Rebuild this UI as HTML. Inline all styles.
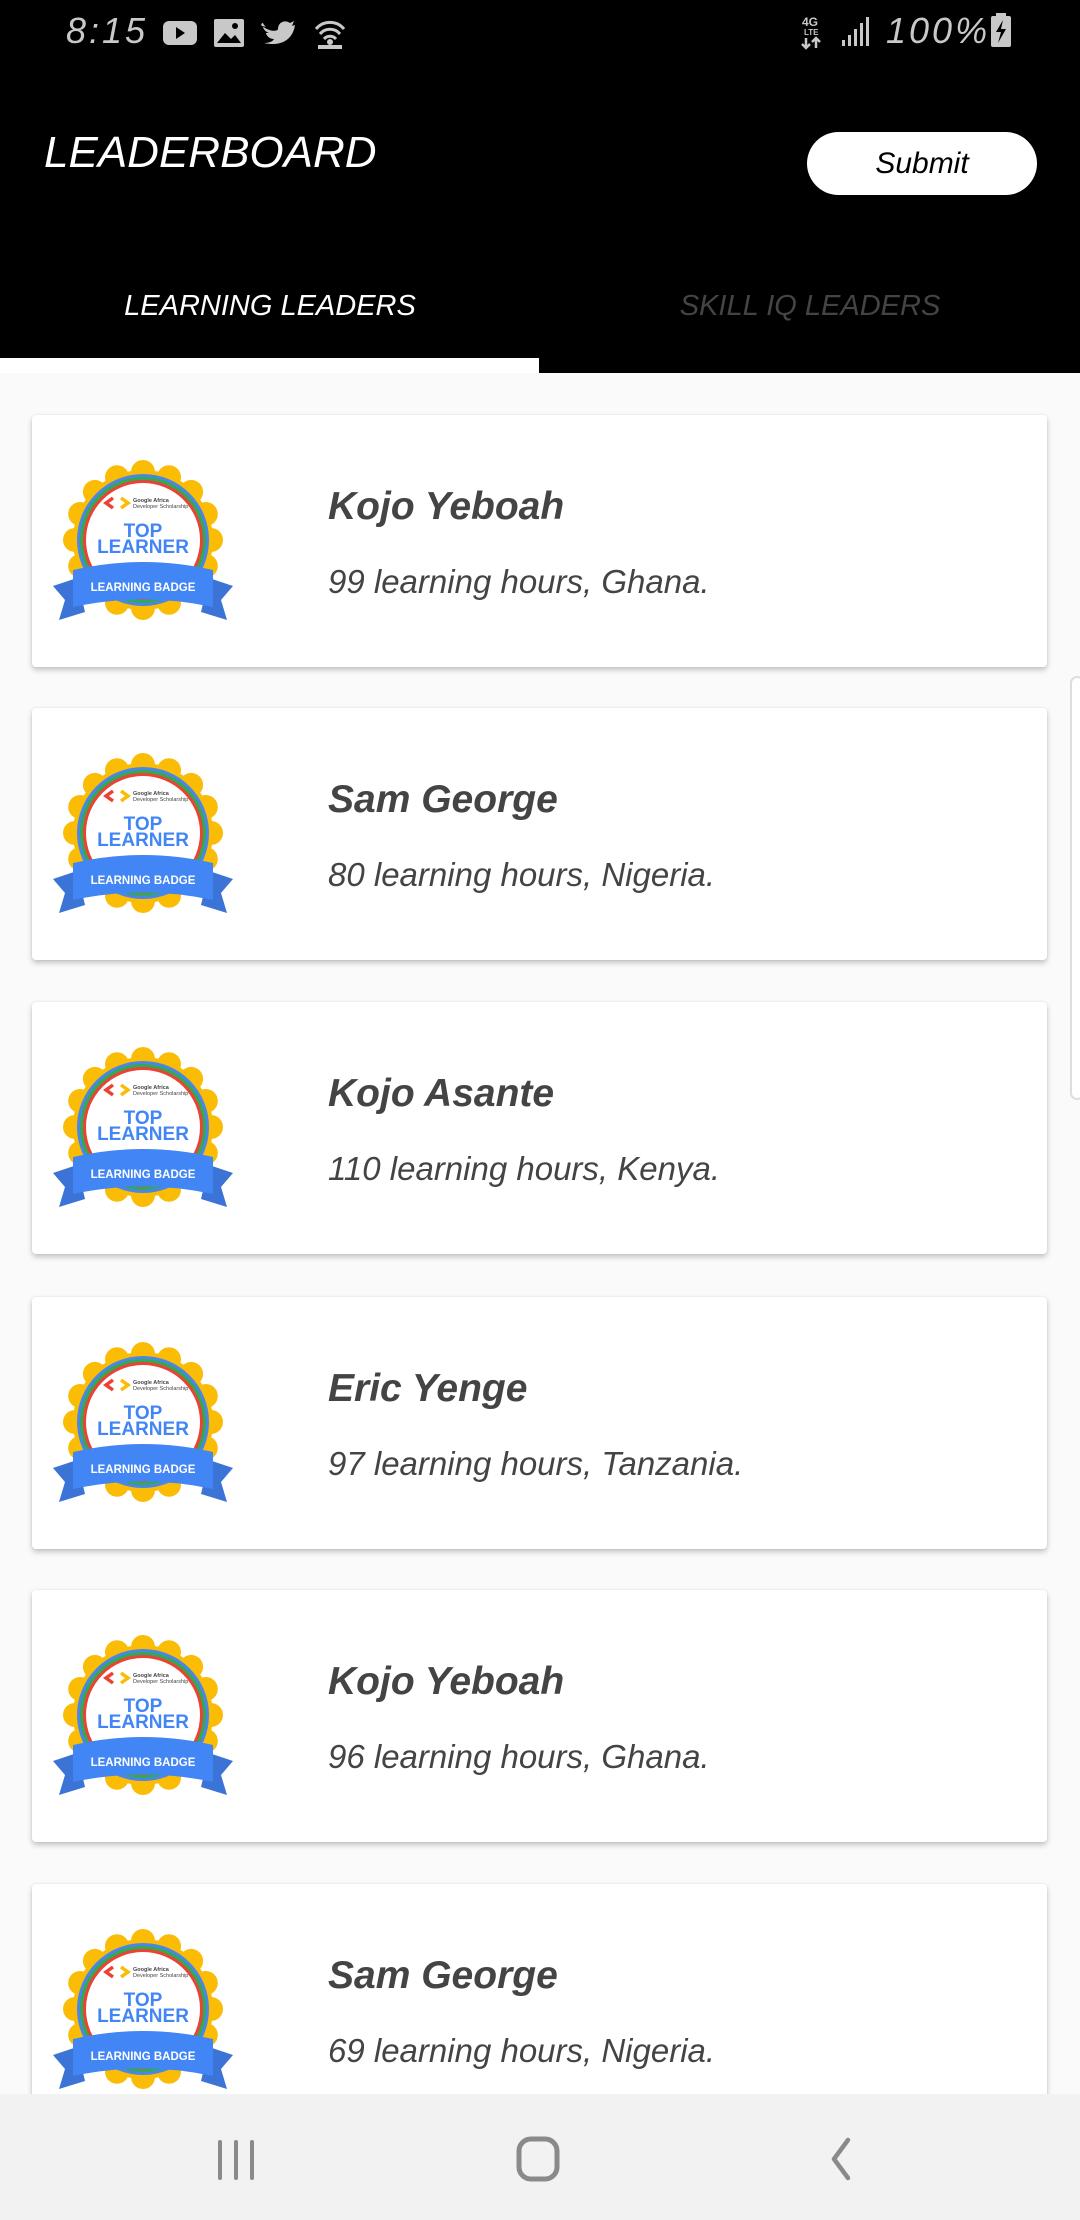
<!DOCTYPE html>
<html><head><meta charset="utf-8"><style>
*{margin:0;padding:0;box-sizing:border-box}
body{width:1080px;height:2220px;overflow:hidden;background:#fafafa;font-family:"Liberation Sans",sans-serif;position:relative}
.hdr{position:absolute;left:0;top:0;width:1080px;height:373px;background:#000}
.sb{position:absolute;top:10px;color:#c8c8c8;font-size:36px;font-style:italic;letter-spacing:3px}
.title{position:absolute;left:44px;top:128px;color:#fff;font-size:44px;font-style:italic;letter-spacing:0px}
.btn{position:absolute;left:807px;top:132px;width:230px;height:63px;border-radius:32px;background:#fff;color:#000;font-size:30px;font-style:italic;text-align:center;line-height:63px}
.tab{position:absolute;top:290px;font-size:29px;font-style:italic;text-align:center;width:540px}
.ind{position:absolute;left:0;top:358px;width:539px;height:15px;background:#fff}
.card{position:absolute;left:32px;width:1015px;height:252px;background:#fff;border-radius:4px;box-shadow:0 3px 6px rgba(0,0,0,.22),0 0 2px rgba(0,0,0,.08)}
.card svg{position:absolute;left:0;top:0}
.nm{position:absolute;left:296px;top:70px;font-size:39px;font-weight:bold;font-style:italic;color:#444}
.dt{position:absolute;left:296px;top:148px;font-size:33px;font-style:italic;color:#444}
.nav{position:absolute;left:0;top:2094px;width:1080px;height:126px;background:#f2f2f2}
</style></head><body>
<div class="hdr">
<div class="sb" style="left:66px">8:15</div>
<svg style="position:absolute;left:160px;top:17px" width="200" height="32" viewBox="0 0 200 32">
<rect x="3" y="4" width="34" height="24" rx="6" fill="#c8c8c8"/><path d="M16 10 L25 16 L16 22Z" fill="#000"/>
<rect x="54" y="2" width="30" height="28" rx="2" fill="#c8c8c8"/><path d="M57 26 L65 16 L71 22 L75 18 L81 26Z" fill="#000"/><circle cx="75" cy="9" r="3" fill="#000"/>
<path d="M101 8 C110 16 118 14 118 12 C118 6 124 2 130 6 L134 4 L132 9 L135 8 C133 22 122 30 104 26 C110 26 113 24 114 22 C109 22 106 18 106 16 L109 16 C104 14 103 11 103 9 L106 10 C102 6 103 4 101 8Z" fill="#c8c8c8"/>
<path d="M156 12 A18 18 0 0 1 184 12 M160 17 A13 13 0 0 1 180 17 M164 22 A8 8 0 0 1 176 22" stroke="#c8c8c8" stroke-width="3" fill="none"/><circle cx="170" cy="25" r="3" fill="#c8c8c8"/><rect x="158" y="28" width="24" height="4" fill="#c8c8c8"/>
</svg>
<svg style="position:absolute;left:800px;top:14px" width="40" height="36"><text x="2" y="12" fill="#c8c8c8" font-size="12" font-weight="bold" font-family="Liberation Sans">4G</text><text x="4" y="21" fill="#c8c8c8" font-size="8" font-weight="bold" font-family="Liberation Sans">LTE</text><path d="M6 24 V34 M2 30 L6 34 L10 30 M16 34 V24 M12 28 L16 24 L20 28" stroke="#c8c8c8" stroke-width="2.5" fill="none"/></svg>
<svg style="position:absolute;left:840px;top:16px" width="30" height="32"><rect x="2" y="24" width="3" height="6" fill="#c8c8c8"/><rect x="8" y="19" width="3" height="11" fill="#c8c8c8"/><rect x="14" y="13" width="3" height="17" fill="#c8c8c8"/><rect x="20" y="7" width="3" height="23" fill="#c8c8c8"/><rect x="26" y="1" width="3" height="29" fill="#c8c8c8"/></svg>
<div class="sb" style="left:886px">100%</div>
<svg style="position:absolute;left:990px;top:13px" width="24" height="36"><rect x="6" y="0" width="10" height="4" fill="#c8c8c8"/><rect x="1" y="3" width="20" height="31" rx="2" fill="#c8c8c8"/><path d="M13 7 L6 19 L11 19 L8 30 L16 16 L11 16Z" fill="#000"/></svg>
<div class="title">LEADERBOARD</div>
<div class="btn">Submit</div>
<div class="tab" style="left:0;color:#fff">LEARNING LEADERS</div>
<div class="tab" style="left:540px;color:#444">SKILL IQ LEADERS</div>
</div>
<div class="ind"></div>

<div class="card" style="top:415px">
<svg width="230" height="250"><g transform="translate(111,125)">
<circle r="70" fill="#fbbc05"/><g fill="#fbbc05"><circle cx="68" cy="0" r="12"/><circle cx="62.8" cy="26" r="12"/><circle cx="48.1" cy="48.1" r="12"/><circle cx="26" cy="62.8" r="12"/><circle cx="0" cy="68" r="12"/><circle cx="-26" cy="62.8" r="12"/><circle cx="-48.1" cy="48.1" r="12"/><circle cx="-62.8" cy="26" r="12"/><circle cx="-68" cy="0" r="12"/><circle cx="-62.8" cy="-26" r="12"/><circle cx="-48.1" cy="-48.1" r="12"/><circle cx="-26" cy="-62.8" r="12"/><circle cx="0" cy="-68" r="12"/><circle cx="26" cy="-62.8" r="12"/><circle cx="48.1" cy="-48.1" r="12"/><circle cx="62.8" cy="-26" r="12"/></g>
<circle r="66" fill="#4a86e8"/><circle r="63" fill="#34a853"/><circle r="60" fill="#ea4335"/><circle r="57" fill="#fff"/>
<path d="M-30,-42 L-37,-37 L-30,-32" stroke="#ea4335" stroke-width="3.5" fill="none"/><path d="M-22,-42 L-15,-37 L-22,-32" stroke="#fbbc05" stroke-width="3.5" fill="none"/>
<text x="-10" y="-38" font-size="5.5" font-weight="bold" fill="#444" font-family="Liberation Sans">Google Africa</text><text x="-10" y="-32" font-size="5.5" fill="#444" font-family="Liberation Sans">Developer Scholarship</text>
<text x="0" y="-3" text-anchor="middle" font-size="19" font-weight="bold" fill="#4285f4" font-family="Liberation Sans">TOP</text><text x="0" y="13" text-anchor="middle" font-size="19" font-weight="bold" fill="#4285f4" font-family="Liberation Sans">LEARNER</text>
<path d="M-66,38 L-90,46 L-78,60 L-84,80 L-58,72 Z" fill="#3b73d6"/><path d="M66,38 L90,46 L78,60 L84,80 L58,72 Z" fill="#3b73d6"/>
<path d="M-70,30 Q0,14 70,30 L70,67 Q0,52 -70,67 Z" fill="#4285f4"/>
<text x="0" y="51" text-anchor="middle" font-size="11.5" font-weight="bold" fill="#fff" font-family="Liberation Sans">LEARNING BADGE</text></g></svg>
<div class="nm">Kojo Yeboah</div><div class="dt">99 learning hours, Ghana.</div></div>

<div class="card" style="top:708px">
<svg width="230" height="250"><g transform="translate(111,125)">
<circle r="70" fill="#fbbc05"/><g fill="#fbbc05"><circle cx="68" cy="0" r="12"/><circle cx="62.8" cy="26" r="12"/><circle cx="48.1" cy="48.1" r="12"/><circle cx="26" cy="62.8" r="12"/><circle cx="0" cy="68" r="12"/><circle cx="-26" cy="62.8" r="12"/><circle cx="-48.1" cy="48.1" r="12"/><circle cx="-62.8" cy="26" r="12"/><circle cx="-68" cy="0" r="12"/><circle cx="-62.8" cy="-26" r="12"/><circle cx="-48.1" cy="-48.1" r="12"/><circle cx="-26" cy="-62.8" r="12"/><circle cx="0" cy="-68" r="12"/><circle cx="26" cy="-62.8" r="12"/><circle cx="48.1" cy="-48.1" r="12"/><circle cx="62.8" cy="-26" r="12"/></g>
<circle r="66" fill="#4a86e8"/><circle r="63" fill="#34a853"/><circle r="60" fill="#ea4335"/><circle r="57" fill="#fff"/>
<path d="M-30,-42 L-37,-37 L-30,-32" stroke="#ea4335" stroke-width="3.5" fill="none"/><path d="M-22,-42 L-15,-37 L-22,-32" stroke="#fbbc05" stroke-width="3.5" fill="none"/>
<text x="-10" y="-38" font-size="5.5" font-weight="bold" fill="#444" font-family="Liberation Sans">Google Africa</text><text x="-10" y="-32" font-size="5.5" fill="#444" font-family="Liberation Sans">Developer Scholarship</text>
<text x="0" y="-3" text-anchor="middle" font-size="19" font-weight="bold" fill="#4285f4" font-family="Liberation Sans">TOP</text><text x="0" y="13" text-anchor="middle" font-size="19" font-weight="bold" fill="#4285f4" font-family="Liberation Sans">LEARNER</text>
<path d="M-66,38 L-90,46 L-78,60 L-84,80 L-58,72 Z" fill="#3b73d6"/><path d="M66,38 L90,46 L78,60 L84,80 L58,72 Z" fill="#3b73d6"/>
<path d="M-70,30 Q0,14 70,30 L70,67 Q0,52 -70,67 Z" fill="#4285f4"/>
<text x="0" y="51" text-anchor="middle" font-size="11.5" font-weight="bold" fill="#fff" font-family="Liberation Sans">LEARNING BADGE</text></g></svg>
<div class="nm">Sam George</div><div class="dt">80 learning hours, Nigeria.</div></div>

<div class="card" style="top:1002px">
<svg width="230" height="250"><g transform="translate(111,125)">
<circle r="70" fill="#fbbc05"/><g fill="#fbbc05"><circle cx="68" cy="0" r="12"/><circle cx="62.8" cy="26" r="12"/><circle cx="48.1" cy="48.1" r="12"/><circle cx="26" cy="62.8" r="12"/><circle cx="0" cy="68" r="12"/><circle cx="-26" cy="62.8" r="12"/><circle cx="-48.1" cy="48.1" r="12"/><circle cx="-62.8" cy="26" r="12"/><circle cx="-68" cy="0" r="12"/><circle cx="-62.8" cy="-26" r="12"/><circle cx="-48.1" cy="-48.1" r="12"/><circle cx="-26" cy="-62.8" r="12"/><circle cx="0" cy="-68" r="12"/><circle cx="26" cy="-62.8" r="12"/><circle cx="48.1" cy="-48.1" r="12"/><circle cx="62.8" cy="-26" r="12"/></g>
<circle r="66" fill="#4a86e8"/><circle r="63" fill="#34a853"/><circle r="60" fill="#ea4335"/><circle r="57" fill="#fff"/>
<path d="M-30,-42 L-37,-37 L-30,-32" stroke="#ea4335" stroke-width="3.5" fill="none"/><path d="M-22,-42 L-15,-37 L-22,-32" stroke="#fbbc05" stroke-width="3.5" fill="none"/>
<text x="-10" y="-38" font-size="5.5" font-weight="bold" fill="#444" font-family="Liberation Sans">Google Africa</text><text x="-10" y="-32" font-size="5.5" fill="#444" font-family="Liberation Sans">Developer Scholarship</text>
<text x="0" y="-3" text-anchor="middle" font-size="19" font-weight="bold" fill="#4285f4" font-family="Liberation Sans">TOP</text><text x="0" y="13" text-anchor="middle" font-size="19" font-weight="bold" fill="#4285f4" font-family="Liberation Sans">LEARNER</text>
<path d="M-66,38 L-90,46 L-78,60 L-84,80 L-58,72 Z" fill="#3b73d6"/><path d="M66,38 L90,46 L78,60 L84,80 L58,72 Z" fill="#3b73d6"/>
<path d="M-70,30 Q0,14 70,30 L70,67 Q0,52 -70,67 Z" fill="#4285f4"/>
<text x="0" y="51" text-anchor="middle" font-size="11.5" font-weight="bold" fill="#fff" font-family="Liberation Sans">LEARNING BADGE</text></g></svg>
<div class="nm">Kojo Asante</div><div class="dt">110 learning hours, Kenya.</div></div>

<div class="card" style="top:1297px">
<svg width="230" height="250"><g transform="translate(111,125)">
<circle r="70" fill="#fbbc05"/><g fill="#fbbc05"><circle cx="68" cy="0" r="12"/><circle cx="62.8" cy="26" r="12"/><circle cx="48.1" cy="48.1" r="12"/><circle cx="26" cy="62.8" r="12"/><circle cx="0" cy="68" r="12"/><circle cx="-26" cy="62.8" r="12"/><circle cx="-48.1" cy="48.1" r="12"/><circle cx="-62.8" cy="26" r="12"/><circle cx="-68" cy="0" r="12"/><circle cx="-62.8" cy="-26" r="12"/><circle cx="-48.1" cy="-48.1" r="12"/><circle cx="-26" cy="-62.8" r="12"/><circle cx="0" cy="-68" r="12"/><circle cx="26" cy="-62.8" r="12"/><circle cx="48.1" cy="-48.1" r="12"/><circle cx="62.8" cy="-26" r="12"/></g>
<circle r="66" fill="#4a86e8"/><circle r="63" fill="#34a853"/><circle r="60" fill="#ea4335"/><circle r="57" fill="#fff"/>
<path d="M-30,-42 L-37,-37 L-30,-32" stroke="#ea4335" stroke-width="3.5" fill="none"/><path d="M-22,-42 L-15,-37 L-22,-32" stroke="#fbbc05" stroke-width="3.5" fill="none"/>
<text x="-10" y="-38" font-size="5.5" font-weight="bold" fill="#444" font-family="Liberation Sans">Google Africa</text><text x="-10" y="-32" font-size="5.5" fill="#444" font-family="Liberation Sans">Developer Scholarship</text>
<text x="0" y="-3" text-anchor="middle" font-size="19" font-weight="bold" fill="#4285f4" font-family="Liberation Sans">TOP</text><text x="0" y="13" text-anchor="middle" font-size="19" font-weight="bold" fill="#4285f4" font-family="Liberation Sans">LEARNER</text>
<path d="M-66,38 L-90,46 L-78,60 L-84,80 L-58,72 Z" fill="#3b73d6"/><path d="M66,38 L90,46 L78,60 L84,80 L58,72 Z" fill="#3b73d6"/>
<path d="M-70,30 Q0,14 70,30 L70,67 Q0,52 -70,67 Z" fill="#4285f4"/>
<text x="0" y="51" text-anchor="middle" font-size="11.5" font-weight="bold" fill="#fff" font-family="Liberation Sans">LEARNING BADGE</text></g></svg>
<div class="nm">Eric Yenge</div><div class="dt">97 learning hours, Tanzania.</div></div>

<div class="card" style="top:1590px">
<svg width="230" height="250"><g transform="translate(111,125)">
<circle r="70" fill="#fbbc05"/><g fill="#fbbc05"><circle cx="68" cy="0" r="12"/><circle cx="62.8" cy="26" r="12"/><circle cx="48.1" cy="48.1" r="12"/><circle cx="26" cy="62.8" r="12"/><circle cx="0" cy="68" r="12"/><circle cx="-26" cy="62.8" r="12"/><circle cx="-48.1" cy="48.1" r="12"/><circle cx="-62.8" cy="26" r="12"/><circle cx="-68" cy="0" r="12"/><circle cx="-62.8" cy="-26" r="12"/><circle cx="-48.1" cy="-48.1" r="12"/><circle cx="-26" cy="-62.8" r="12"/><circle cx="0" cy="-68" r="12"/><circle cx="26" cy="-62.8" r="12"/><circle cx="48.1" cy="-48.1" r="12"/><circle cx="62.8" cy="-26" r="12"/></g>
<circle r="66" fill="#4a86e8"/><circle r="63" fill="#34a853"/><circle r="60" fill="#ea4335"/><circle r="57" fill="#fff"/>
<path d="M-30,-42 L-37,-37 L-30,-32" stroke="#ea4335" stroke-width="3.5" fill="none"/><path d="M-22,-42 L-15,-37 L-22,-32" stroke="#fbbc05" stroke-width="3.5" fill="none"/>
<text x="-10" y="-38" font-size="5.5" font-weight="bold" fill="#444" font-family="Liberation Sans">Google Africa</text><text x="-10" y="-32" font-size="5.5" fill="#444" font-family="Liberation Sans">Developer Scholarship</text>
<text x="0" y="-3" text-anchor="middle" font-size="19" font-weight="bold" fill="#4285f4" font-family="Liberation Sans">TOP</text><text x="0" y="13" text-anchor="middle" font-size="19" font-weight="bold" fill="#4285f4" font-family="Liberation Sans">LEARNER</text>
<path d="M-66,38 L-90,46 L-78,60 L-84,80 L-58,72 Z" fill="#3b73d6"/><path d="M66,38 L90,46 L78,60 L84,80 L58,72 Z" fill="#3b73d6"/>
<path d="M-70,30 Q0,14 70,30 L70,67 Q0,52 -70,67 Z" fill="#4285f4"/>
<text x="0" y="51" text-anchor="middle" font-size="11.5" font-weight="bold" fill="#fff" font-family="Liberation Sans">LEARNING BADGE</text></g></svg>
<div class="nm">Kojo Yeboah</div><div class="dt">96 learning hours, Ghana.</div></div>

<div class="card" style="top:1884px">
<svg width="230" height="250"><g transform="translate(111,125)">
<circle r="70" fill="#fbbc05"/><g fill="#fbbc05"><circle cx="68" cy="0" r="12"/><circle cx="62.8" cy="26" r="12"/><circle cx="48.1" cy="48.1" r="12"/><circle cx="26" cy="62.8" r="12"/><circle cx="0" cy="68" r="12"/><circle cx="-26" cy="62.8" r="12"/><circle cx="-48.1" cy="48.1" r="12"/><circle cx="-62.8" cy="26" r="12"/><circle cx="-68" cy="0" r="12"/><circle cx="-62.8" cy="-26" r="12"/><circle cx="-48.1" cy="-48.1" r="12"/><circle cx="-26" cy="-62.8" r="12"/><circle cx="0" cy="-68" r="12"/><circle cx="26" cy="-62.8" r="12"/><circle cx="48.1" cy="-48.1" r="12"/><circle cx="62.8" cy="-26" r="12"/></g>
<circle r="66" fill="#4a86e8"/><circle r="63" fill="#34a853"/><circle r="60" fill="#ea4335"/><circle r="57" fill="#fff"/>
<path d="M-30,-42 L-37,-37 L-30,-32" stroke="#ea4335" stroke-width="3.5" fill="none"/><path d="M-22,-42 L-15,-37 L-22,-32" stroke="#fbbc05" stroke-width="3.5" fill="none"/>
<text x="-10" y="-38" font-size="5.5" font-weight="bold" fill="#444" font-family="Liberation Sans">Google Africa</text><text x="-10" y="-32" font-size="5.5" fill="#444" font-family="Liberation Sans">Developer Scholarship</text>
<text x="0" y="-3" text-anchor="middle" font-size="19" font-weight="bold" fill="#4285f4" font-family="Liberation Sans">TOP</text><text x="0" y="13" text-anchor="middle" font-size="19" font-weight="bold" fill="#4285f4" font-family="Liberation Sans">LEARNER</text>
<path d="M-66,38 L-90,46 L-78,60 L-84,80 L-58,72 Z" fill="#3b73d6"/><path d="M66,38 L90,46 L78,60 L84,80 L58,72 Z" fill="#3b73d6"/>
<path d="M-70,30 Q0,14 70,30 L70,67 Q0,52 -70,67 Z" fill="#4285f4"/>
<text x="0" y="51" text-anchor="middle" font-size="11.5" font-weight="bold" fill="#fff" font-family="Liberation Sans">LEARNING BADGE</text></g></svg>
<div class="nm">Sam George</div><div class="dt">69 learning hours, Nigeria.</div></div>

<div style="position:absolute;left:1070px;top:676px;width:14px;height:424px;border:2px solid #ddd;border-radius:8px;background:#fff"></div>

<div class="nav">
<svg style="position:absolute;left:214px;top:44px" width="44" height="44"><path d="M6 4 V40 M22 4 V40 M38 4 V40" stroke="#8a8a8a" stroke-width="4" stroke-linecap="round"/></svg>
<svg style="position:absolute;left:516px;top:42px" width="44" height="46"><rect x="3" y="3" width="38" height="40" rx="12" stroke="#8a8a8a" stroke-width="5" fill="none"/></svg>
<svg style="position:absolute;left:826px;top:42px" width="30" height="46"><path d="M22 4 L8 23 L22 42" stroke="#8a8a8a" stroke-width="4.5" fill="none" stroke-linecap="round" stroke-linejoin="round"/></svg>
</div>
</body></html>
